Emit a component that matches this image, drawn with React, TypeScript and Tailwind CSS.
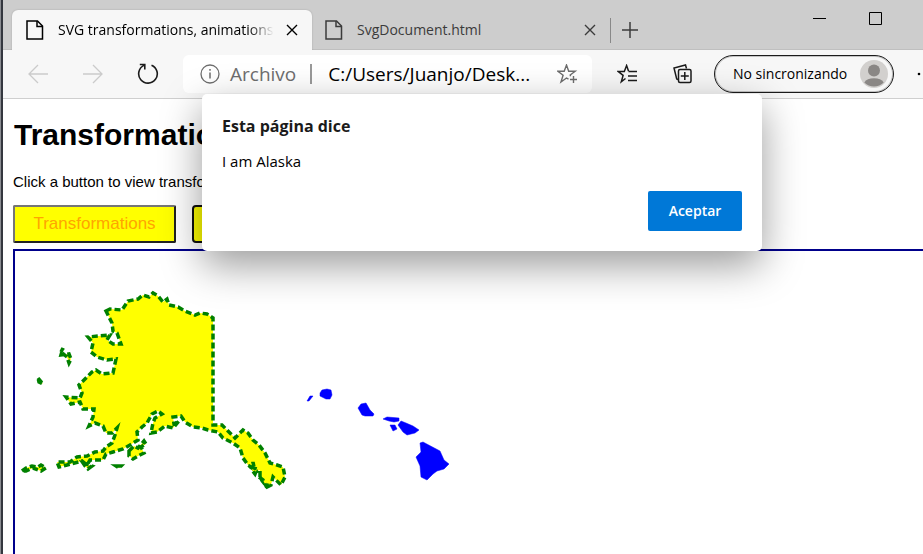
import React from "react";

const uiFont = "font-['Segoe_UI','Open_Sans',sans-serif]";
const pageFont = "font-['Liberation_Sans',Arial,sans-serif]";

function FileIcon() {
  return (
    <svg className="shrink-0" width="18" height="20" viewBox="0 0 18 20" fill="none" stroke="currentColor" strokeWidth="1.5">
      <path d="M1 1h10.500l5 5v13H1z" />
      <path d="M11 1v5.500h5.500" />
    </svg>
  );
}

function CloseIcon() {
  return (
    <svg width="12" height="12" viewBox="0 0 12 12" fill="none" stroke="currentColor" strokeWidth="1.4">
      <path d="M1 1l10 10M11 1L1 11" />
    </svg>
  );
}

function TabStrip() {
  return (
    <div className="flex h-[50px] shrink-0 items-stretch bg-[#cdcdcd] pl-[9px] shadow-[inset_0_-1px_0_#bfbfbf]">
      <div className="mt-[10px] flex w-[300px] shrink-0 items-center rounded-t-md bg-[#f7f7f7] pl-[14px] pr-3 text-black shadow-[0_0_2px_rgba(0,0,0,0.2)]">
        <FileIcon />
        <span className="ml-[14px] w-[216px] overflow-hidden whitespace-nowrap text-[14px] leading-5 [mask-image:linear-gradient(to_right,black_88%,transparent)]">
          SVG transformations, animations
        </span>
        <button aria-label="Cerrar pestaña" className="ml-3 shrink-0">
          <CloseIcon />
        </button>
      </div>
      <div className="mt-[10px] flex w-[298px] shrink-0 items-center border-r border-transparent pl-[13px] pr-[13px] text-[#3b3b3b]">
        <FileIcon />
        <span className="ml-[14px] flex-1 whitespace-nowrap text-[14px] leading-5">SvgDocument.html</span>
        <button aria-label="Cerrar pestaña">
          <CloseIcon />
        </button>
      </div>
      <div className="mt-[18px] h-[25px] w-px bg-[#888]" />
      <button aria-label="Nueva pestaña" className="ml-[11px] mt-[10px] shrink-0 text-[#3b3b3b]">
        <svg width="16" height="16" viewBox="0 0 16 16" stroke="currentColor" strokeWidth="1.5">
          <path d="M8 0v16M0 8h16" />
        </svg>
      </button>
      <div className="ml-auto flex gap-[43px] pr-[41px] pt-[12px] text-black">
        <button aria-label="Minimizar" className="h-[13px]">
          <svg width="13" height="13" stroke="currentColor">
            <path d="M0 6.500h13" />
          </svg>
        </button>
        <button aria-label="Maximizar" className="h-[13px]">
          <svg width="13" height="13" fill="none" stroke="currentColor">
            <path d="M.5 .5h12v12H.5z" />
          </svg>
        </button>
      </div>
    </div>
  );
}

function Toolbar() {
  return (
    <div className="flex h-[49px] shrink-0 items-center overflow-hidden border-b border-[#cfcfcf] bg-[#f7f7f7] pl-[25px]">
      <button aria-label="Atrás" className="shrink-0 text-[#cbcbcb]">
        <svg width="20" height="20" viewBox="0 0 20 20" fill="none" stroke="currentColor" strokeWidth="1.300">
          <path d="M20 10H1M10 1L1 10l9 9" />
        </svg>
      </button>
      <button aria-label="Adelante" className="ml-[35px] shrink-0 text-[#cbcbcb]">
        <svg width="20" height="20" viewBox="0 0 20 20" fill="none" stroke="currentColor" strokeWidth="1.300">
          <path d="M0 10h19M10 1l9 9-9 9" />
        </svg>
      </button>
      <button aria-label="Actualizar" className="ml-[34px] shrink-0 text-[#1b1b1b]">
        <svg width="22" height="22" viewBox="0 0 22 22" fill="none" stroke="currentColor" strokeWidth="1.600">
          <path d="M14.500 2.200A9.300 9.300 0 1 1 7 2.400M2.800 1.500h5v5" />
        </svg>
      </button>
      <div className="ml-6 flex h-[38px] w-[409px] shrink-0 items-center rounded-md bg-white pl-[17px] pr-[14px]">
        <svg className="shrink-0 text-[#6e6e6e]" width="20" height="20" viewBox="0 0 20 20" fill="none" stroke="currentColor" strokeWidth="1.300">
          <circle cx="10" cy="10" r="9" />
          <path d="M10 8.500v6M10 5v1.700" strokeWidth="1.500" />
        </svg>
        <span className="ml-[10px] text-[19px] leading-6 text-[#6e6e6e]">Archivo</span>
        <span className="ml-[14px] h-5 w-[2px] bg-[#999]" />
        <input
          aria-label="Dirección"
          readOnly
          value="C:/Users/Juanjo/Desk..."
          className="ml-4 w-0 min-w-0 flex-1 bg-transparent text-[19px] leading-6 text-black outline-none"
        />
        <button aria-label="Agregar a favoritos" className="shrink-0 text-[#6e6e6e]">
          <svg width="21" height="20" viewBox="0 0 21 20" fill="none" stroke="currentColor" strokeWidth="1.400">
            <path d="M11.500 15.200L9.500 14 4 18l2.100-6.800L.9 7.300h6.300L9.500 1l2.200 6.300h6.500l-5 3.700.4 1.300" />
            <path d="M16.500 12v7M13 15.500h7" />
          </svg>
        </button>
      </div>
      <button aria-label="Favoritos" className="ml-[25px] shrink-0 text-[#1b1b1b]">
        <svg width="21" height="20" viewBox="0 0 21 20" fill="none" stroke="currentColor" strokeWidth="1.500">
          <path d="M8.500 14.500L4.300 17.800l1.800-6.400L1 7.400h6.300l2.300-5.900 1.900 5.400M11.500 7.500H20M11 12h9M11 16.500h9" />
        </svg>
      </button>
      <button aria-label="Colecciones" className="ml-[35px] shrink-0 text-[#1b1b1b]">
        <svg width="19" height="20" viewBox="0 0 19 20" fill="none" stroke="currentColor" strokeWidth="1.500">
          <path d="M5 15.500l-1.300-.5L1 4l11.500-3 1 3.500" />
          <rect x="5.500" y="5.500" width="12.500" height="13" rx="1.500" />
          <path d="M11.800 8v8M7.800 12h8" />
        </svg>
      </button>
      <button className="ml-[22px] flex h-[38px] w-[180px] shrink-0 items-center rounded-full border border-[#1b1b1b] pl-[18px] text-[14px] leading-5 text-black shadow-[inset_0_0_0_1px_#c4c4c4]">
        <span className="flex-1 whitespace-nowrap text-left">No sincronizando</span>
        <svg className="mr-[5px] shrink-0" width="28" height="28" viewBox="0 0 28 28">
          <circle cx="14" cy="14" r="14" fill="#d2d0ce" />
          <circle cx="14" cy="10.500" r="6" fill="#8a8785" />
          <path d="M4.300 22.500a10.500 6.800 0 0 1 19.400 0A14 14 0 0 1 4.300 22.500z" fill="#8a8785" />
        </svg>
      </button>
      <button aria-label="Más opciones" className="ml-[23px] shrink-0 text-black">
        <svg width="18" height="4" fill="currentColor">
          <circle cx="2" cy="2" r="1.300" />
          <circle cx="9" cy="2" r="1.300" />
          <circle cx="16" cy="2" r="1.300" />
        </svg>
      </button>
    </div>
  );
}

const alaska = [
  // Mainland, clockwise from the north-west cape
  "M106 311L110 309L122 310L128 301L138 299L143 295L149 297L153 293L158 296L163 302L167 299L169 305L178 307L185 311L195 315L200 313L207 314L213 318V425L222 425L227 430L235 438L238 435L243 430L248 433L253 440L259 445L265 453L270 463L277 465L283 467L285 477L281 485L273 477L271 485L267 487L260 478L260 470L255 472L253 462L252 468L248 465L243 458L240 448L233 443L223 438L218 432L208 430L202 428L193 427L185 422L181 416L173 417L174 424L179 421L173 428L165 426L157 432L151 433L153 423L155 418L162 414L158 411L152 414L147 423L142 427L137 432L138 440L130 445L123 449L113 452L106 454L103 460L90 460L87 465L82 461L67 465L59 467L57 462L70 462L77 457L87 456L95 452L103 451L106 447L112 443L115 435L117 428L112 433L106 433L103 426L95 423L89 426L93 417L94 409L83 409L80 402L71 404L66 397L80 398L82 393L79 385L85 379L92 372L96 370L102 374L113 373L116 359L107 360L97 357L91 352L93 343L88 337L98 336L110 335L107 340L113 344L121 344L117 333L113 331L112 323L108 315Z",
  // Kodiak
  "M129 451L134 446L138 448L144 441L146 444L141 447L144 453L138 456L133 459L129 456Z",
  // Aleutians
  "M22 471L26 468L32 466L38 467L41 465L46 468L41 471L33 468L26 471Z",
  "M83 463L92 466L88 469L85 466Z",
  "M116 466L121 466L119 468Z",
  // Bering Sea islands
  "M61 352L63 348L61 355L69 354L71 359L69 363L67 357Z",
  "M38 378L43 384L39 382Z",
  // Panhandle islands
  "M251 467L257 469L255 474L252 470Z",
  "M259 477L263 480L266 486L270 484",
];

const hawaii = [
  "M307 401L310 396L313 396L309 401Z",
  "M320 393L322 390L327 389L331 390L332 395L330 399L326 399L320 396Z",
  "M358 408L361 404L366 403L370 410L374 414L373 416L365 416L362 415Z",
  "M383 419L387 417L399 418L399 421L394 422L389 421Z",
  "M390 425L395 425L397 429L393 431Z",
  "M398 425L401 421L406 423L413 426L419 430L415 433L407 435L403 432Z",
  "M420 443L423 442L440 451L444 460L449 464L444 469L437 471L433 474L427 480L421 477L420 466L416 457L421 452Z",
];

function StatesMap() {
  return (
    <div className="ml-px mt-[6px] flex-1 overflow-hidden border-l-2 border-t-2 border-[#00008b]">
      <svg width="908" height="303" viewBox="15 251 908 303">
        <g fill="yellow" stroke="green" strokeWidth="3.500" strokeDasharray="6 3">
          {alaska.map((d) => (
            <path key={d} d={d} />
          ))}
        </g>
        <g fill="blue" stroke="blue" strokeWidth="0.500">
          {hawaii.map((d) => (
            <path key={d} d={d} />
          ))}
        </g>
      </svg>
    </div>
  );
}

function Dialog() {
  return (
    <div
      role="alertdialog"
      aria-labelledby="dialog-title"
      aria-describedby="dialog-text"
      className="absolute left-[202px] top-[94px] flex w-[560px] flex-col rounded-[5px] bg-white px-5 pb-5 pt-5 text-black shadow-[0_14px_40px_rgba(0,0,0,0.4)]"
    >
      <h2 id="dialog-title" className="text-[16px] font-bold leading-6 text-[#1b1b1b]">Esta página dice</h2>
      <p id="dialog-text" className="mt-[13px] text-[15px] leading-5">I am Alaska</p>
      <button className="mt-5 h-10 w-[94px] self-end rounded-[2px] bg-[#0078d7] text-[14px] font-semibold leading-5 text-white">
        Aceptar
      </button>
    </div>
  );
}

export default function App() {
  return (
    <div className={`relative flex h-screen overflow-hidden bg-white ${uiFont}`}>
      <div className="w-[3px] shrink-0 border-l border-[#8b8d92] bg-[#34373f]" />
      <div className="flex min-w-0 flex-1 flex-col">
        <TabStrip />
        <Toolbar />
        <main className={`flex min-h-0 flex-1 flex-col pl-[9px] pt-[18px] text-black ${pageFont}`}>
          <h1 className="ml-[2px] whitespace-nowrap text-[30px] font-bold leading-9">Transformations, animations</h1>
          <p className="ml-px mt-5 whitespace-nowrap text-[15px] leading-[18px]">Click a button to view transformations or animations</p>
          <div className="ml-px mt-[14px] flex gap-4">
            <button className="h-[38px] w-[163px] rounded-[2px] border-2 border-b-[#222] border-l-[#767676] border-r-[#222] border-t-[#767676] bg-[yellow] text-[17px] leading-5 text-[orange]">
              Transformations
            </button>
            <button className="h-[38px] w-[163px] rounded-[4px] border-2 border-[#101010] bg-[yellow] text-[17px] leading-5 text-[orange]">
              Animations
            </button>
          </div>
          <StatesMap />
        </main>
      </div>
      <Dialog />
    </div>
  );
}
